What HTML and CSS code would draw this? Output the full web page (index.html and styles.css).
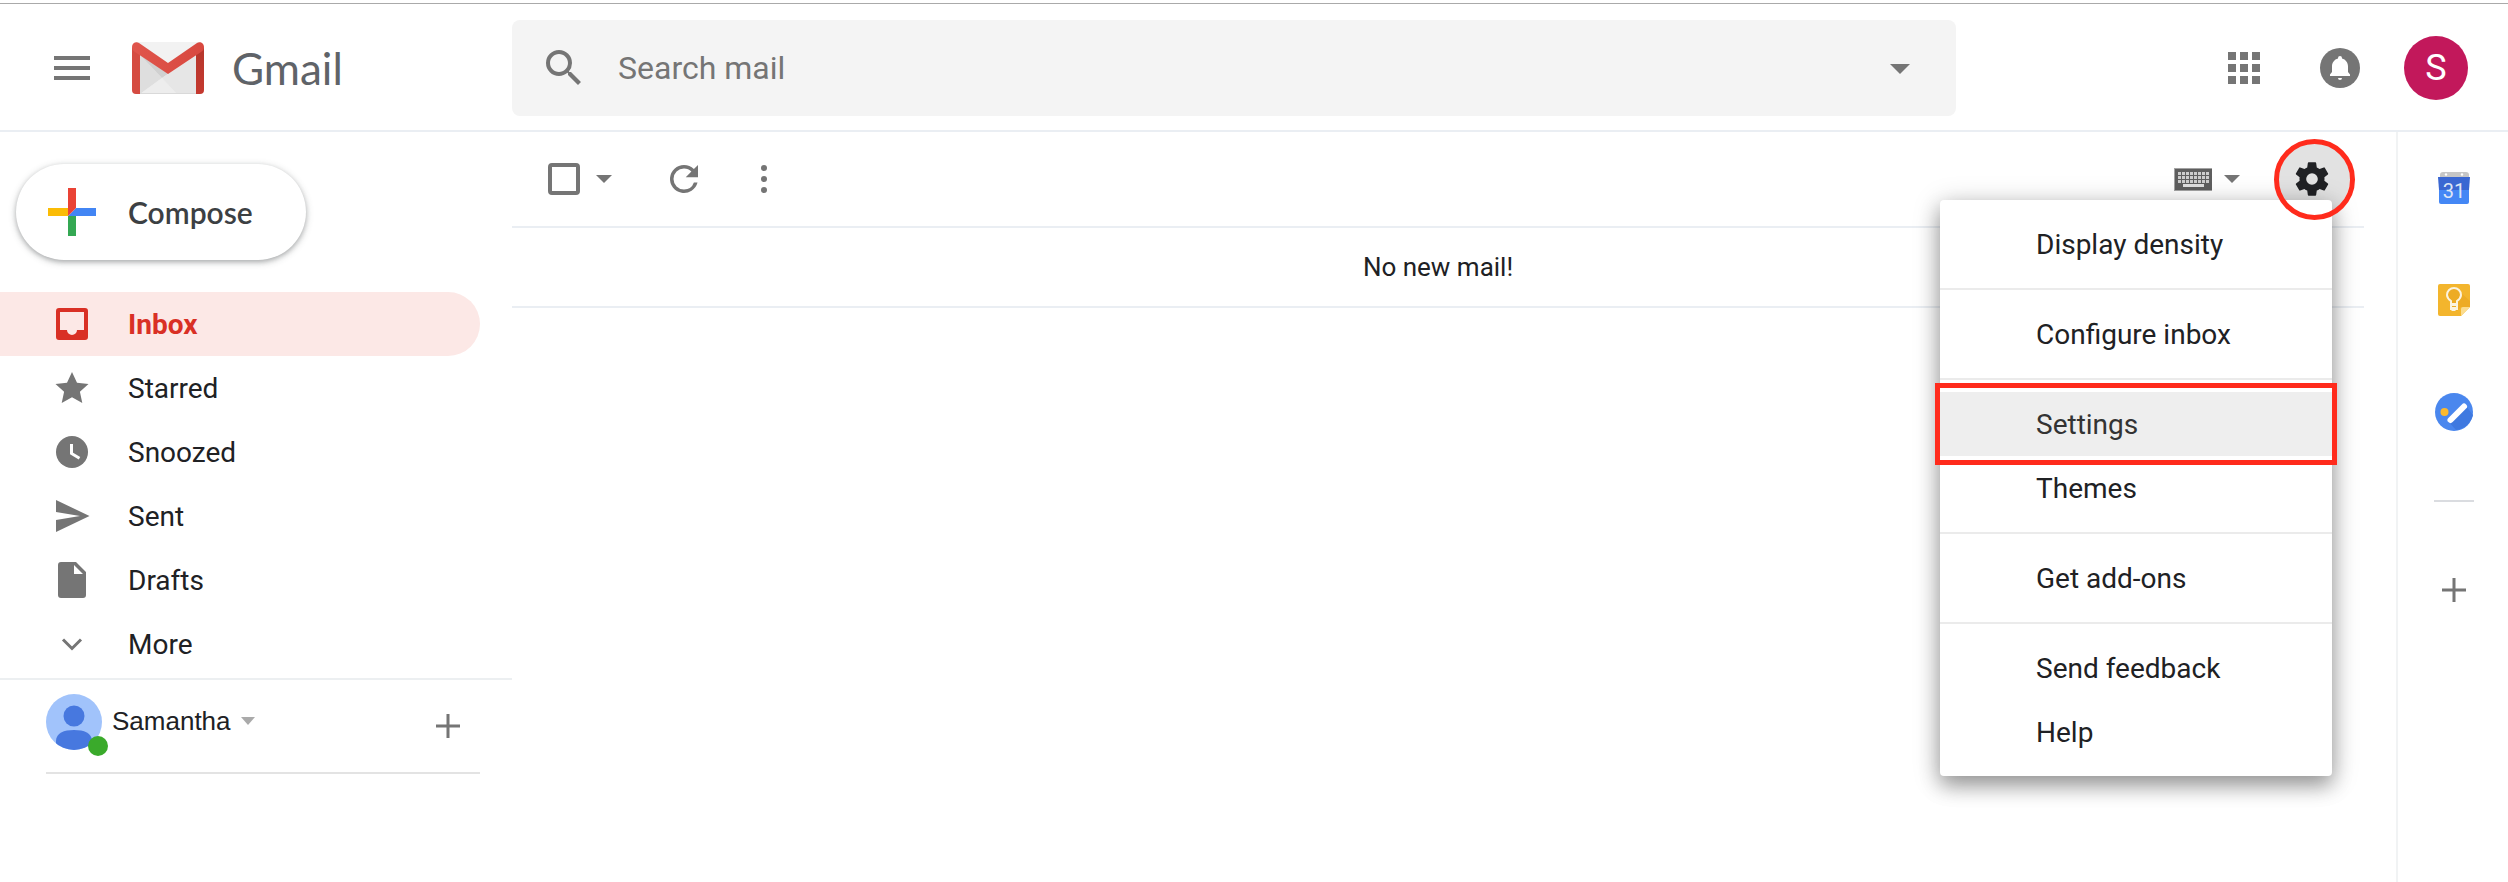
FILE: index.html
```html
<!DOCTYPE html>
<html lang="en">
<head>
<meta charset="utf-8">
<meta name="viewport" content="width=device-width, initial-scale=1">
<title>Gmail</title>
<link rel="stylesheet" href="styles.css">
</head>
<body>
<div class="app">
  <header class="header">
    <div class="brand">
      <button class="icon-btn" type="button" aria-label="Main menu">
        <svg width="48" height="48" viewBox="0 0 48 48"><path d="M6 12h36v4H6zM6 22h36v4H6zM6 32h36v4H6z"/></svg>
      </button>
      <a class="logo" href="#">
        <svg width="72" height="52" viewBox="0 0 72 52" aria-hidden="true">
          <defs>
            <linearGradient id="right-bar" x1="0" y1="0" x2="0" y2="1"><stop offset="0" stop-color="#b5362c"/><stop offset="1" stop-color="#c5392f"/></linearGradient>
            <linearGradient id="flap" x1="0" y1="0" x2="1" y2="0"><stop offset="0" stop-color="#e0554c"/><stop offset="1" stop-color="#d8483f"/></linearGradient>
          </defs>
          <path fill="#ededed" d="M4 0h64v52H4z"/>
          <path fill="#dedede" d="M8 13l22 23L8 52z"/>
          <path fill="#d0d0d0" d="M8 13l22 23 7-5z"/>
          <path fill="#e6e6e6" d="M30 36l34-22v38H45z"/>
          <path fill="#ededed" d="M8 52l22-16 15 16z"/>
          <path fill="#f2f2f2" d="M6 0h60L36 21z"/>
          <path fill="#d9d9d9" d="M8 51h56v1H8z"/>
          <path fill="#d54b41" d="M0 5l8 7v40H4a4 4 0 0 1-4-4z"/>
          <path fill="url(#right-bar)" d="M72 5l-8 7v40h4a4 4 0 0 0 4-4z"/>
          <path fill="url(#flap)" d="M0 5C0 1 4-1 7 1l29 20L65 1c3-2 7 0 7 4 0 2-1 4-3 5L36 32 3 10C1 9 0 7 0 5z"/>
        </svg>
        <span class="logo-text">Gmail</span>
      </a>
    </div>
    <form class="search" role="search">
      <button class="icon-btn" type="button" aria-label="Search">
        <svg width="48" height="48" viewBox="0 0 24 24"><path d="M15.500 14h-.79l-.28-.27A6.471 6.471 0 0 0 16 9.500 6.500 6.500 0 1 0 9.500 16c1.610 0 3.090-.59 4.230-1.570l.27.28v.79l5 4.990L20.490 19l-4.990-5zm-6 0C7.010 14 5 11.990 5 9.500S7.010 5 9.500 5 14 7.010 14 9.500 11.990 14 9.500 14z"/></svg>
      </button>
      <input class="search-input" type="text" placeholder="Search mail" aria-label="Search mail">
      <button class="icon-btn" type="button" aria-label="Search options">
        <svg width="48" height="48" viewBox="0 0 48 48"><path d="M14 20h20L24 30z"/></svg>
      </button>
    </form>
    <div class="account">
      <button class="icon-btn" type="button" aria-label="Google apps">
        <svg width="48" height="48" viewBox="0 0 48 48"><path d="M8 8h8v8H8zM20 8h8v8h-8zM32 8h8v8h-8zM8 20h8v8H8zM20 20h8v8h-8zM32 20h8v8h-8zM8 32h8v8H8zM20 32h8v8h-8zM32 32h8v8h-8z"/></svg>
      </button>
      <button class="icon-btn" type="button" aria-label="Notifications">
        <svg width="48" height="48" viewBox="0 0 48 48"><circle cx="24" cy="24" r="20"/><path fill="#fff" d="M24 12a2 2 0 0 0-2 2v.6c-3.700 1-6 4-6 8V28l-2 2.500V32h20v-1.500L32 28v-5.400c0-4-2.300-7-6-8V14a2 2 0 0 0-2-2zM22 34h4a2 2 0 0 1-4 0z"/></svg>
      </button>
      <button class="avatar" type="button" aria-label="Google Account">S</button>
    </div>
  </header>

  <div class="body">
    <aside class="sidebar">
      <button class="compose" type="button">
        <svg width="48" height="48" viewBox="0 0 48 48" aria-hidden="true"><path fill="#34a853" d="M20 28h8v20h-8z"/><path fill="#4285f4" d="M28 20h20v8H20z"/><path fill="#fbbc05" d="M0 20h20v8H0z"/><path fill="#ea4335" d="M20 0h8v20l-8 8z"/></svg>
        Compose
      </button>
      <nav class="nav">
        <a class="nav-item active" href="#"><svg width="48" height="48" viewBox="0 0 48 48"><path fill-rule="evenodd" d="M11 8h26a3 3 0 0 1 3 3v26a3 3 0 0 1-3 3H11a3 3 0 0 1-3-3V11a3 3 0 0 1 3-3zm1 4v18h7a5 5 0 0 0 10 0h7V12z"/></svg>Inbox</a>
        <a class="nav-item" href="#"><svg width="48" height="48" viewBox="0 0 48 48"><path d="M24 8l5 10.800 11.500 1.200-8.600 7.800L34.300 39 24 33.200 13.700 39l2.400-11.200L7.500 20 19 18.800z"/></svg>Starred</a>
        <a class="nav-item" href="#"><svg width="48" height="48" viewBox="0 0 48 48"><circle cx="24" cy="24" r="16"/><path fill="none" stroke="#fff" stroke-width="3" d="M23.500 16v9.500l8 4.800"/></svg>Snoozed</a>
        <a class="nav-item" href="#"><svg width="48" height="48" viewBox="0 0 48 48"><path d="M8 8l33.500 16L8 40V28l24-4-24-4z"/></svg>Sent</a>
        <a class="nav-item" href="#"><svg width="48" height="48" viewBox="0 0 48 48"><path fill-rule="evenodd" d="M13 6h15l10 10v23a3 3 0 0 1-3 3H13a3 3 0 0 1-3-3V9a3 3 0 0 1 3-3zm13 3v9h9z"/></svg>Drafts</a>
        <a class="nav-item" href="#"><svg width="48" height="48" viewBox="0 0 48 48"><path fill="none" stroke="#757575" stroke-width="3" d="M15 19.500l9 9 9-9"/></svg>More</a>
      </nav>
      <section class="chat">
        <div class="chat-row">
          <div class="chat-photo">
            <svg width="56" height="56" viewBox="0 0 56 56" aria-hidden="true"><clipPath id="photo"><circle cx="28" cy="28" r="28"/></clipPath><g clip-path="url(#photo)"><path fill="#a1c3fb" d="M0 0h56v56H0z"/><circle cx="28" cy="22" r="10.500" fill="#4778df"/><path fill="#4778df" d="M10 56V47c0-8 8-11 18-11s18 3 18 11v9z"/></g></svg>
            <span class="status"></span>
          </div>
          <button class="chat-name" type="button">Samantha
            <svg width="14" height="8" viewBox="0 0 14 8" aria-hidden="true"><path fill="#aaa" d="M0 0h14L7 8z"/></svg>
          </button>
          <button class="icon-btn chat-add" type="button" aria-label="New conversation">
            <svg width="48" height="48" viewBox="0 0 48 48"><path fill="none" stroke="#757575" stroke-width="3" d="M24 12v24M12 24h24"/></svg>
          </button>
        </div>
      </section>
    </aside>

    <main class="main">
      <div class="toolbar">
        <div class="select-all">
          <input class="checkbox" type="checkbox" aria-label="Select all">
          <button class="caret" type="button" aria-label="Select options"><svg width="16" height="8" viewBox="0 0 16 8"><path d="M0 0h16L8 8z"/></svg></button>
        </div>
        <button class="icon-btn" type="button" aria-label="Refresh">
          <svg width="42" height="42" viewBox="0 0 24 24"><path d="M17.650 6.350A7.958 7.958 0 0 0 12 4a8 8 0 1 0 7.730 10h-2.080A5.990 5.990 0 0 1 12 18a6 6 0 1 1 0-12c1.660 0 3.140.69 4.220 1.780L13 11h7V4z"/></svg>
        </button>
        <button class="icon-btn more" type="button" aria-label="More">
          <svg width="48" height="48" viewBox="0 0 48 48"><circle cx="24" cy="13" r="3"/><circle cx="24" cy="24" r="3"/><circle cx="24" cy="35" r="3"/></svg>
        </button>
        <div class="tools">
          <button class="keyboard" type="button" aria-label="Input tools">
            <svg width="38" height="23" viewBox="0 0 38 23"><path fill="#a3a3a3" d="M0 0h38v23H0z"/><path fill="#5e5e5e" d="M1 1h37v21H1z"/><path stroke="#ccc" stroke-width="3" stroke-dasharray="3 1" d="M4 5.500h31M4 9.500h31M4 13.500h31"/><path fill="#e0e0e0" d="M9 16h21v3H9z"/></svg>
            <svg width="16" height="8" viewBox="0 0 16 8"><path d="M0 0h16L8 8z"/></svg>
          </button>
          <div class="settings">
            <button class="gear" type="button" aria-label="Settings menu" aria-expanded="true">
              <svg width="40" height="40" viewBox="0 0 24 24"><path fill="#202124" d="M19.430 12.980c.04-.32.07-.64.07-.98s-.03-.66-.07-.98l2.110-1.650a.5.5 0 0 0 .12-.64l-2-3.460a.5.5 0 0 0-.61-.22l-2.490 1a7.300 7.300 0 0 0-1.690-.98l-.38-2.650A.488.488 0 0 0 14 2h-4a.488.488 0 0 0-.49.42l-.38 2.650c-.61.25-1.170.59-1.690.98l-2.490-1a.5.5 0 0 0-.61.22l-2 3.460a.5.5 0 0 0 .12.64l2.110 1.650c-.04.32-.07.65-.07.98s.03.66.07.98l-2.110 1.650a.5.5 0 0 0-.12.64l2 3.460c.12.22.39.3.61.22l2.490-1c.52.4 1.080.73 1.690.98l.38 2.650c.03.24.24.42.49.42h4c.25 0 .46-.18.49-.42l.38-2.650c.61-.25 1.170-.59 1.690-.98l2.490 1c.23.09.49 0 .61-.22l2-3.460a.5.5 0 0 0-.12-.64l-2.110-1.650zM12 15.500A3.500 3.500 0 1 1 12 8.500a3.500 3.500 0 0 1 0 7z"/></svg>
            </button>
            <span class="gear-ring"></span>
          </div>
        </div>
        <ul class="menu">
          <li><button type="button">Display density</button></li>
          <li class="divider"></li>
          <li><button type="button">Configure inbox</button></li>
          <li class="divider"></li>
          <li class="highlight"><button type="button">Settings</button></li>
          <li><button type="button">Themes</button></li>
          <li class="divider"></li>
          <li><button type="button">Get add-ons</button></li>
          <li class="divider"></li>
          <li><button type="button">Send feedback</button></li>
          <li><button type="button">Help</button></li>
        </ul>
      </div>
      <p class="empty">No new mail!</p>
    </main>

    <aside class="panel">
      <button class="panel-btn" type="button" aria-label="Calendar">
        <svg width="40" height="40" viewBox="0 0 40 40"><path fill="#c6c6c6" d="M6 7a3 3 0 0 1 3-3h23a3 3 0 0 1 3 3v3H6z"/><circle cx="12" cy="6.500" r="1.200" fill="#fff"/><circle cx="28" cy="6.500" r="1.200" fill="#fff"/><path fill="#3a67d2" d="M4 9h32l-1 13H5z"/><path fill="#4487f5" d="M5 22h30v12a2 2 0 0 1-2 2H7a2 2 0 0 1-2-2z"/><text class="cal-day" x="20" y="30" text-anchor="middle">31</text></svg>
      </button>
      <button class="panel-btn" type="button" aria-label="Keep">
        <svg width="40" height="40" viewBox="0 0 40 40"><path fill="#f3b52d" d="M6 4h28a2 2 0 0 1 2 2v21l-9 9H6a2 2 0 0 1-2-2V6a2 2 0 0 1 2-2z"/><path fill="#edab24" d="M26 12l10 9v6h-9l-4 4-6-6z"/><path fill="#fbdc8e" d="M27 36v-7a2 2 0 0 1 2-2h7z"/><path fill="#edab24" stroke="#fbf3df" stroke-width="2" d="M17 24v-3c-2-1.500-4-3.500-4-6a7 7 0 0 1 14 0c0 2.500-2 4.500-4 6v3z"/><path fill="#fbf3df" d="M16 24h8v6h-2l-1 1h-3l-1-1h-1z"/><path fill="#edab24" d="M18 26h4v1h-4z"/></svg>
      </button>
      <button class="panel-btn" type="button" aria-label="Tasks">
        <svg width="40" height="40" viewBox="0 0 40 40"><circle cx="20" cy="20" r="19" fill="#4a87ee"/><path fill="#3f79e0" d="M14 29l8 9c8-1 15-7 17-15l-7-9z"/><path stroke="#fff" stroke-width="6" stroke-linecap="round" d="M16.500 28L30 14.500"/><circle cx="10.500" cy="20" r="4" fill="#fbb92e"/></svg>
      </button>
      <span class="panel-line"></span>
      <button class="panel-btn" type="button" aria-label="Get add-ons">
        <svg width="48" height="48" viewBox="0 0 48 48"><path fill="none" stroke="#757575" stroke-width="3" d="M24 12v24M12 24h24"/></svg>
      </button>
    </aside>
  </div>
</div>
</body>
</html>
```
FILE: styles.css
```css
* { box-sizing: border-box; }

body {
  margin: 0;
  background: #fff;
  color: #202124;
  font-family: Roboto, "Liberation Sans", sans-serif;
  font-size: 28px;
}

button {
  padding: 0;
  border: 0;
  background: none;
  color: inherit;
  font: inherit;
  cursor: pointer;
}

svg { display: block; flex: none; fill: #757575; }

.app {
  display: flex;
  flex-direction: column;
  min-height: 100vh;
  padding-top: 3px;
}

.icon-btn { display: flex; align-items: center; justify-content: center; }

/* Header */
.header {
  display: flex;
  align-items: center;
  padding: 16px 40px 14px 0;
  border-top: 1px solid #aaa;
  border-bottom: 2px solid #eaeef3;
}

.brand {
  display: flex;
  align-items: center;
  flex: none;
  gap: 36px;
  width: 512px;
  padding-left: 48px;
}

.logo {
  display: flex;
  align-items: center;
  gap: 28px;
  color: #5f6368;
  text-decoration: none;
}

.logo-text { font: 44px/52px Lato, sans-serif; }

.search {
  display: flex;
  align-items: center;
  flex: 1;
  height: 96px;
  padding: 0 32px 0 28px;
  border-radius: 8px;
  background: #f4f4f4;
}

.search-input {
  flex: 1;
  min-width: 0;
  height: 64px;
  padding: 0 30px;
  border: 0;
  outline: 0;
  background: none;
  color: #202124;
  font: 32px Roboto, sans-serif;
}

.search-input::placeholder { color: #757575; opacity: 1; }

.account {
  display: flex;
  align-items: center;
  gap: 48px;
  margin-left: 264px;
}

.avatar {
  width: 64px;
  height: 64px;
  margin-left: -8px;
  border-radius: 50%;
  background: #c2185b;
  color: #fff;
  font-size: 36px;
}

.body { display: flex; flex: 1; }

/* Sidebar */
.sidebar { flex: none; width: 512px; padding-top: 32px; }

.compose {
  display: flex;
  align-items: center;
  gap: 32px;
  min-width: 290px;
  height: 96px;
  margin: 0 0 32px 16px;
  padding: 0 48px 0 32px;
  border-radius: 48px;
  box-shadow: 0 2px 4px rgba(60, 64, 67, .3), 0 2px 6px 2px rgba(60, 64, 67, .15);
  color: #3c4043;
  font: 600 30px Lato, sans-serif;
}

.nav { padding-bottom: 2px; border-bottom: 2px solid #eceff1; }

.nav-item {
  display: flex;
  align-items: center;
  gap: 32px;
  height: 64px;
  margin-right: 32px;
  padding-left: 48px;
  border-radius: 0 32px 32px 0;
  color: #202124;
  text-decoration: none;
}

.active { background: #fce8e6; color: #d93025; font-weight: 700; }
.active svg { fill: #d93025; }

.chat {
  margin: 0 32px 0 46px;
  border-bottom: 2px solid #e3e3e3;
}

.chat-row { display: flex; align-items: flex-start; height: 92px; padding-top: 14px; }
.chat-photo { position: relative; }

.status {
  position: absolute;
  right: -6px;
  bottom: -6px;
  width: 20px;
  height: 20px;
  border-radius: 50%;
  background: #3aaa2b;
}

.chat-name {
  display: flex;
  align-items: center;
  gap: 10px;
  height: 54px;
  margin-left: 10px;
  font: 26px "Liberation Sans", Arial, sans-serif;
}

.chat-add { margin: 8px 8px 0 auto; }

/* Message list */
.main { flex: 1; min-width: 0; padding-right: 32px; }

.toolbar {
  position: relative;
  display: flex;
  align-items: center;
  height: 96px;
  padding: 0 14px 0 36px;
  border-bottom: 2px solid #eaeef3;
}

.select-all { display: flex; align-items: center; gap: 16px; margin-right: 51px; }

.checkbox {
  width: 32px;
  height: 32px;
  margin: 0;
  border: 4px solid #757575;
  border-radius: 4px;
  appearance: none;
}

.more { margin-left: 35px; }

.tools { display: flex; align-items: center; gap: 34px; margin-left: auto; }
.keyboard { display: flex; align-items: center; gap: 12px; }
.settings { position: relative; }

.gear {
  display: flex;
  align-items: center;
  justify-content: center;
  width: 76px;
  height: 76px;
  border-radius: 50%;
  background: #e2e2e2;
}

.gear-ring {
  position: absolute;
  z-index: 3;
  inset: -2px -5px -3px 0;
  border: 5px solid #ff2b1c;
  border-radius: 50%;
  pointer-events: none;
}

.menu {
  position: absolute;
  z-index: 2;
  top: 68px;
  right: 32px;
  width: 392px;
  margin: 0;
  padding: 12px 0;
  border-radius: 4px;
  background: #fff;
  box-shadow: 0 10px 20px rgba(0, 0, 0, .3), 0 4px 28px rgba(0, 0, 0, .22);
  list-style: none;
}

.menu button {
  display: block;
  width: 100%;
  height: 64px;
  padding-left: 96px;
  text-align: left;
}

.divider { height: 2px; margin: 12px 0; background: #ebebeb; }

.highlight { position: relative; background: #eee; color: #333; }

.highlight::after {
  content: "";
  position: absolute;
  inset: -9px -5px;
  border: 5px solid #ff2b1c;
  pointer-events: none;
}

.empty {
  margin: 0;
  border-bottom: 2px solid #eaeef3;
  font-size: 26px;
  line-height: 78px;
  text-align: center;
}

/* Side panel */
.panel {
  display: flex;
  flex-direction: column;
  align-items: center;
  flex: none;
  width: 112px;
  padding-left: 2px;
  border-left: 2px solid #f1f3f4;
}

.panel-btn {
  display: flex;
  align-items: center;
  justify-content: center;
  width: 100%;
  height: 112px;
}

.panel-line { width: 40px; height: 2px; margin: 32px 0; background: #dadce0; }

.cal-day { fill: #dfe6f5; font-size: 20px; }
```
